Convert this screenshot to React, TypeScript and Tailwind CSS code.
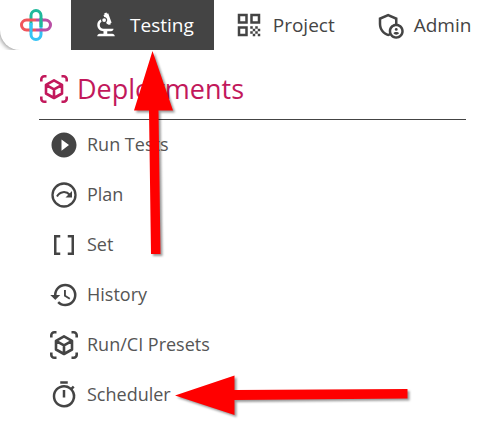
import type { ReactNode } from "react";
import {
  MdBiotech,
  MdDataArray,
  MdHistory,
  MdOutlineAdminPanelSettings,
  MdOutlineTimer,
  MdPlayCircleFilled,
  MdQrCode,
} from "react-icons/md";

function Logo() {
  return (
    <svg viewBox="0 0 32 32" className="size-8" fill="none" strokeWidth="3" aria-hidden="true">
      <path d="M11 16V6.500a5 5 0 0 1 10 0V16" stroke="#1fb99b" />
      <path d="M21 16v9.500a5 5 0 0 1-10 0V16" stroke="#35c3f5" />
      <path d="M16 11h9.500a5 5 0 0 1 0 10H16" stroke="#b94fa5" />
      <path d="M16 21H6.500a5 5 0 0 1 0-10H16" stroke="#f0555c" />
      <path d="M21 9v9" stroke="#1fb99b" />
      <path d="M11 14v9" stroke="#35c3f5" />
    </svg>
  );
}

function PlanIcon() {
  return (
    <svg viewBox="0 0 30 30" className="size-[30px]" fill="none" aria-hidden="true">
      <circle cx="15" cy="15" r="11.500" stroke="currentColor" strokeWidth="2.300" />
      <path d="M8 16.500c2.500-5 9-6 13-1.500" stroke="currentColor" strokeWidth="2" />
      <path d="M23 11v6.500h-6.500z" fill="currentColor" />
    </svg>
  );
}

function CubeScanIcon() {
  return (
    <svg
      viewBox="0 0 30 30"
      className="size-[30px] shrink-0"
      fill="none"
      stroke="currentColor"
      strokeWidth="2.600"
      aria-hidden="true"
    >
      <path d="M2.300 7.500V5.300a3 3 0 0 1 3-3H7.500M22.500 2.300h2.200a3 3 0 0 1 3 3V7.500M27.700 22.500v2.200a3 3 0 0 1-3 3H22.500M7.500 27.700H5.300a3 3 0 0 1-3-3V22.500" />
      <path d="M15 6.300 23 10.800V19.500L15 24 7 19.500V10.800ZM7 10.800l8 4.600 8-4.600M15 15.400V24" strokeLinejoin="round" />
    </svg>
  );
}

function NavButton({ icon, label, active = false }: { icon: ReactNode; label: string; active?: boolean }) {
  return (
    <button
      type="button"
      className={`flex h-full shrink-0 items-center gap-[9px] px-5 text-[19px] ${
        active ? "bg-[#444] text-white" : "text-[#444]"
      }`}
    >
      <span className="size-[30px] text-[30px]">{icon}</span>
      {label}
    </button>
  );
}

const items: { label: string; icon: ReactNode }[] = [
  { label: "Run Tests", icon: <MdPlayCircleFilled /> },
  { label: "Plan", icon: <PlanIcon /> },
  { label: "Set", icon: <MdDataArray /> },
  { label: "History", icon: <MdHistory /> },
  { label: "Run/CI Presets", icon: <CubeScanIcon /> },
  { label: "Scheduler", icon: <MdOutlineTimer /> },
];

export default function App() {
  return (
    <div className="relative min-h-screen overflow-hidden bg-white font-['Open_Sans','Noto_Sans',sans-serif] text-[#444]">
      <header className="h-[50px] overflow-hidden">
        <nav className="flex h-full rounded-bl-[20px] shadow-[-1px_1px_4px_rgba(0,0,0,0.4)]">
          <a href="#home" aria-label="Home" className="flex w-[71px] shrink-0 items-center justify-center">
            <Logo />
          </a>
          <NavButton icon={<MdBiotech />} label="Testing" active />
          <NavButton icon={<MdQrCode />} label="Project" />
          <NavButton icon={<MdOutlineAdminPanelSettings />} label="Admin" />
        </nav>
      </header>
      <main className="mr-8 ml-[39px]">
        <h1 className="flex h-[70px] items-center gap-2 border-b border-[#444] pt-2 text-[27px] text-[#c2185b]">
          <CubeScanIcon />
          <span className="pt-[2px]">Deployments</span>
        </h1>
        <ul>
          {items.map(({ label, icon }) => (
            <li key={label}>
              <a href="#item" className="flex h-[50px] items-center gap-2 pl-[10px] text-lg">
                <span className="size-[30px] text-[30px]">{icon}</span>
                <span className="pb-[2px] text-[#555]">{label}</span>
              </a>
            </li>
          ))}
        </ul>
      </main>
      <svg
        viewBox="0 0 498 437"
        className="pointer-events-none absolute top-0 left-0 h-[437px] w-[498px] drop-shadow-[2px_2px_1px_rgba(0,0,0,0.4)]"
        fill="#f00"
        aria-hidden="true"
      >
        <path d="M152.500 51 173 110.500H158.500L160.500 254H151L149 110.500H134z" />
        <path d="M175 395.500 234.500 375.500V390L407.500 389V398.500L234.500 400V415z" />
      </svg>
    </div>
  );
}
